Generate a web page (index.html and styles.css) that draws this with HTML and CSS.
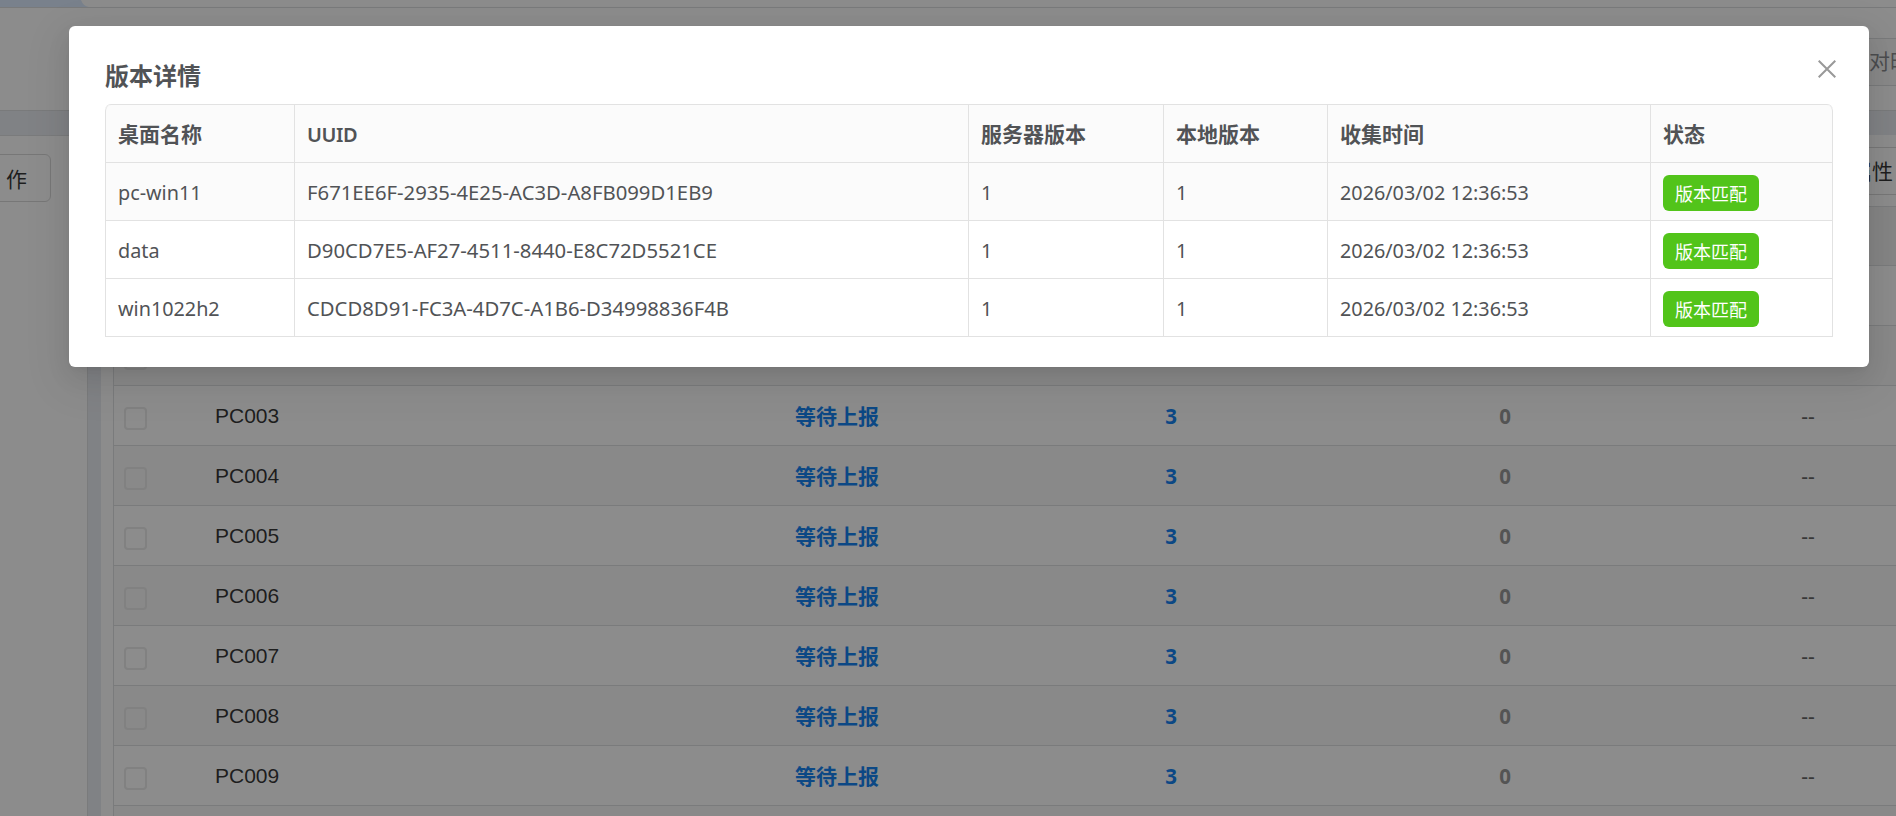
FILE: index.html
```html
<!DOCTYPE html>
<html lang="zh-CN">
<head>
<meta charset="utf-8">
<title>版本详情</title>
<link rel="stylesheet" href="styles.css">
</head>
<body>
<div class="app">
  <div class="tabs"><div class="tab-active"></div></div>
  <header class="topbar"><div class="time-select">对时</div></header>
  <div class="divider"></div>
  <div class="body">
    <aside class="sidebar"><button class="side-btn"><span class="op-first">操</span> 作</button></aside>
    <div class="gutter"></div>
    <main class="content">
      <div class="toolbar"><button class="attr-btn">属性</button></div>
      <div class="list">
        <div class="row head"></div>
        <div class="row"></div>
        <div class="row alt"></div>
      </div>
    </main>
  </div>
</div>
<div class="mask"></div>
<section class="modal">
  <h2 class="title">版本详情</h2>
  <svg class="close" viewBox="0 0 18 18"><path d="M.7 .7L17.3 17.3M17.3 .7L.7 17.3"/></svg>
  <div class="grid" id="versions"></div>
</section>
<script src="app.js"></script>
</body>
</html>
```
FILE: styles.css
```css
* { box-sizing: border-box; }
body {
  margin: 0;
  height: 816px;
  overflow: hidden;
  position: relative;
  font-family: "Liberation Sans", "Noto Sans CJK SC", sans-serif;
  font-size: 21px;
  color: rgba(0, 0, 0, .8);
  background: #fff;
}
.app { height: 816px; display: flex; flex-direction: column; overflow: hidden; }
.tabs { flex: none; height: 8px; border-bottom: 1px solid #dcdee0; }
.tab-active { width: 89px; height: 7px; background: #dcebff; clip-path: path("M0 0H81Q83 6 89 7H0Z"); }
.topbar { flex: none; height: 102px; padding-top: 30px; display: flex; justify-content: flex-end; }
.time-select {
  width: 48px;
  height: 48px;
  padding-left: 20px;
  line-height: 46px;
  white-space: nowrap;
  overflow: hidden;
  border: 1px solid #dcdee0;
  border-right: 0;
  color: #8b8d90;
  background: #fafafa;
}
.divider { flex: none; height: 25px; background: #e9edf3; border-top: 1px solid #dcdee0; }
.body { flex: 1; min-height: 0; display: flex; }
.sidebar { flex: none; width: 88px; padding-top: 18px; border-top: 1px solid #dfe0e2; border-right: 1px solid #dfe0e2; overflow: hidden; }
button { font: inherit; color: inherit; background: #fff; border: 1px solid #d9d9d9; white-space: nowrap; }
.side-btn { display: block; width: 120px; height: 48px; margin-left: -69px; padding: 0 23px 0 0; text-align: right; border-radius: 6px; }
.op-first { color: #1677ff; }
.gutter { flex: none; width: 13px; background: #e9edf3; }
.content { flex: 1; min-width: 0; padding-left: 12px; overflow: hidden; }
.toolbar { height: 71px; padding-top: 12px; display: flex; justify-content: flex-end; }
.attr-btn { width: 74px; height: 48px; padding: 0 3px 2px; text-align: right; border-right: 0; }
.list { width: 1831px; border-left: 1px solid #dfe0e2; border-top: 1px solid #dfe0e2; }
.row {
  height: 60px;
  display: grid;
  grid-template-columns: 102px 454px 334px 334px 334px 272px;
  align-items: center;
  border-bottom: 1px solid #dfe0e2;
  background: #fff;
  text-align: center;
}
.head { height: 59px; background: #f2f2f2; }
.alt { background: #f9f9f9; }
.check { width: 23px; height: 23px; margin: 5px 0 0 10px; border: 2px solid #ebebeb; border-radius: 4px; }
.name { padding-top: 1px; margin-left: -1px; text-align: left; }
.status { padding-bottom: 1px; font-weight: 700; color: #1684f2; }
.num { padding-top: 1px; font-family: "Noto Sans", sans-serif; font-size: 20.5px; font-weight: 700; color: #1684f2; }
.zero { color: #999; }
.dash { padding-top: 1px; font-family: "Noto Sans", sans-serif; color: #666; }
.mask { position: absolute; inset: 0; background: rgba(0, 0, 0, .45); }
.modal {
  position: absolute;
  left: 69px;
  top: 26px;
  width: 1800px;
  height: 341px;
  padding: 31px 36px 0;
  border-radius: 6px;
  background: #fff;
  color: #515356;
  box-shadow: 0 9px 24px rgba(0, 0, 0, .08), 0 4px 9px -6px rgba(0, 0, 0, .12), 0 13px 42px 12px rgba(0, 0, 0, .05);
  font-family: "Noto Sans", "Noto Sans CJK SC", sans-serif;
}
.title { margin: 0 0 11px; height: 36px; line-height: 36px; font-family: "Noto Sans CJK SC", sans-serif; font-size: 24px; font-weight: 700; }
.close { position: absolute; left: 1749px; top: 34px; width: 18px; height: 18px; fill: none; stroke: #999; stroke-width: 2; }
.grid {
  width: 1728px;
  display: grid;
  grid-template-columns: 190px 674px 195px 164px 323px 182px;
  border-top: 1px solid #e2e2e2;
  border-radius: 6px 6px 0 0;
  overflow: hidden;
}
.cell {
  height: 58px;
  padding: 2px 12px 0;
  display: flex;
  align-items: center;
  border-right: 1px solid #e2e2e2;
  border-bottom: 1px solid #e2e2e2;
  font-size: 19.8px;
  white-space: nowrap;
}
.cell.first { border-left: 1px solid #e2e2e2; }
.cell.uuid { padding-top: 0; font-size: 20.3px; }
.cell.th { padding: 0 12px 2px; font-size: 21px; font-weight: 700; font-family: "Noto Sans CJK SC", sans-serif; background: #fbfbfb; }
.cell.th.latin { padding: 1px 12px 0; font-family: "Noto Sans", sans-serif; font-size: 20px; letter-spacing: -.4px; font-weight: 600; }
.cell.shade { background: #fbfbfb; }
.cell.th.first { border-top-left-radius: 6px; }
.cell.th.last { border-top-right-radius: 6px; }
.tag {
  width: 96px;
  height: 36px;
  border-radius: 6px;
  background: #52c41a;
  color: #fff;
  font-family: "Noto Sans CJK SC", sans-serif;
  font-size: 18px;
  line-height: 36px;
  text-align: center;
}
```
FILE: app.js
```js
const list = document.querySelector('.list');
for (let i = 3; i <= 10; i++) {
  const values = i < 10
    ? `<span class="name">PC${String(i).padStart(3, '0')}</span><span class="status">等待上报</span><span class="num">3</span><span class="num zero">0</span><span class="dash">--</span>`
    : '';
  list.insertAdjacentHTML('beforeend',
    `<div class="row${i % 2 ? '' : ' alt'}"><span class="check"></span>${values}</div>`);
}
list.querySelector('.row.alt').innerHTML = '<span class="check"></span>';

const time = '2026/03/02 12:36:53';
const rows = [
  ['pc-win11', 'F671EE6F-2935-4E25-AC3D-A8FB099D1EB9'],
  ['data', 'D90CD7E5-AF27-4511-8440-E8C72D5521CE'],
  ['win1022h2', 'CDCD8D91-FC3A-4D7C-A1B6-D34998836F4B']
];
const heads = ['桌面名称', 'UUID', '服务器版本', '本地版本', '收集时间', '状态'];
const edge = i => i === 0 ? ' first' : i === 5 ? ' last' : '';
let html = heads.map((h, i) => `<div class="cell th${edge(i)}${i === 1 ? ' latin' : ''}">${h}</div>`).join('');
rows.forEach((r, n) => {
  [...r, '1', '1', time, '<span class="tag">版本匹配</span>'].forEach((v, i) => {
    html += `<div class="cell${edge(i)}${i === 1 ? ' uuid' : ''}${n === 0 ? ' shade' : ''}">${v}</div>`;
  });
});
document.getElementById('versions').innerHTML = html;
```
